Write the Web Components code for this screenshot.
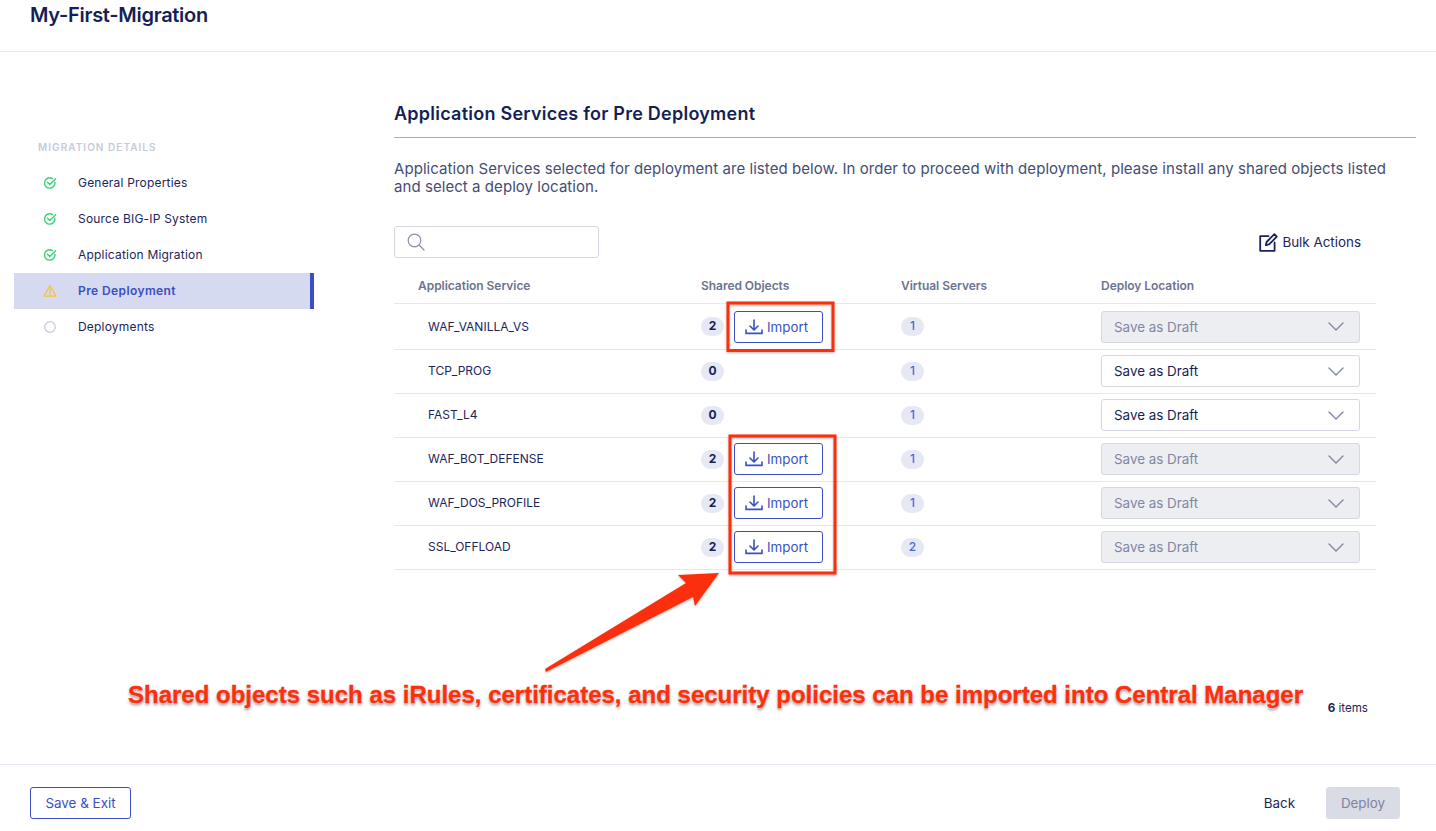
<!DOCTYPE html>
<html>
<head>
<meta charset="utf-8">
<title>Pre Deployment</title>
<style>
    html, body { margin: 0; height: 100%; background: #fff; }
    body { font-family: Inter, "Liberation Sans", sans-serif; color: #1c2559; }
</style>
</head>
<body>
<migration-page>
    <page-header slot="header">My-First-Migration</page-header>
    <side-nav slot="nav" label="MIGRATION DETAILS">
        <nav-step state="done">General Properties</nav-step>
        <nav-step state="done">Source BIG-IP System</nav-step>
        <nav-step state="done">Application Migration</nav-step>
        <nav-step state="warn" active>Pre Deployment</nav-step>
        <nav-step state="todo">Deployments</nav-step>
    </side-nav>
    <deploy-panel slot="main">
        <service-row name="WAF_VANILLA_VS" shared="2" servers="1" first></service-row>
        <service-row name="TCP_PROG" shared="0" servers="1" open></service-row>
        <service-row name="FAST_L4" shared="0" servers="1" open></service-row>
        <service-row name="WAF_BOT_DEFENSE" shared="2" servers="1"></service-row>
        <service-row name="WAF_DOS_PROFILE" shared="2" servers="1"></service-row>
        <service-row name="SSL_OFFLOAD" shared="2" servers="2"></service-row>
    </deploy-panel>
    <page-footer slot="footer"></page-footer>
</migration-page>
<shot-annotation></shot-annotation>

<script>
class MigrationPage extends HTMLElement {
    constructor() {
        super();
        this.attachShadow({ mode: "open" });
        this.shadowRoot.innerHTML = `
            <style>
                :host { display: flex; flex-direction: column; height: 831px; }
                .body { flex: 1; display: flex; min-height: 0; }
            </style>
            <slot name="header"></slot>
            <div class="body">
                <slot name="nav"></slot>
                <slot name="main"></slot>
            </div>
            <slot name="footer"></slot>
        `;
    }
}

class PageHeader extends HTMLElement {
    constructor() {
        super();
        this.attachShadow({ mode: "open" });
        this.shadowRoot.innerHTML = `
            <style>
                :host {
                    display: block;
                    height: 51px;
                    box-sizing: content-box;
                    border-bottom: 1px solid #e6e8f0;
                    padding-left: 30px;
                    font-size: 20px;
                    font-weight: 600;
                    letter-spacing: -0.28px;
                    line-height: 30px;
                    color: #141f57;
                }
            </style>
            <slot></slot>
        `;
    }
}

class SideNav extends HTMLElement {
    constructor() {
        super();
        this.attachShadow({ mode: "open" });
        this.shadowRoot.innerHTML = `
            <style>
                :host { display: block; width: 300px; margin-left: 14px; padding-top: 88px; flex: none; }
                .label {
                    font-size: 10px;
                    font-weight: 600;
                    letter-spacing: 1.05px;
                    line-height: 14px;
                    color: #c6cadb;
                    padding-left: 24px;
                    margin-bottom: 11px;
                }
            </style>
            <div class="label"></div>
            <slot></slot>
        `;
        this.shadowRoot.querySelector(".label").textContent = this.getAttribute("label");
    }
}

const stepIcons = {
    done: `<svg width="14" height="14" viewBox="0 0 14 14" fill="none" stroke="#3ed07a" stroke-width="1.4" stroke-linecap="round" stroke-linejoin="round"><path d="M11.9 6.2A5.2 5.2 0 1 1 9.6 2.6"/><path d="M4.4 6.2 6.8 8.6 12.6 2.8"/></svg>`,
    warn: `<svg width="14" height="14" viewBox="0 0 14 14" fill="none" stroke="#f3c23c" stroke-width="1.3" stroke-linejoin="round"><path d="M7 1.6 13 12.2H1Z"/><path d="M7 5.2V8.8M7 10V10.9" stroke-linecap="round"/></svg>`,
    todo: `<svg width="14" height="14" viewBox="0 0 14 14" fill="none" stroke="#c9ccdc" stroke-width="1.3"><circle cx="7" cy="7" r="5.3"/></svg>`
};

class NavStep extends HTMLElement {
    constructor() {
        super();
        this.attachShadow({ mode: "open" });
        this.shadowRoot.innerHTML = `
            <style>
                :host {
                    display: flex;
                    align-items: center;
                    height: 36px;
                    padding-left: 29px;
                    font-size: 12px;
                    letter-spacing: 0.2px;
                    color: #1c2559;
                    box-sizing: border-box;
                }
                :host([active]) {
                    background: #d6daf0;
                    border-right: 4px solid #3b4fc4;
                    color: #3b4fc4;
                    font-weight: 600;
                    letter-spacing: 0.4px;
                }
                .icon { display: flex; width: 35px; flex: none; }
                .text { padding-bottom: 2px; }
            </style>
            <span class="icon">${stepIcons[this.getAttribute("state")]}</span>
            <span class="text"><slot></slot></span>
        `;
    }
}

class DeployPanel extends HTMLElement {
    constructor() {
        super();
        this.attachShadow({ mode: "open" });
        this.shadowRoot.innerHTML = `
            <style>
                :host { display: block; flex: 1; margin-left: 80px; margin-right: 20px; padding-top: 49px; min-width: 0; }
                h2 {
                    margin: 0;
                    font-size: 18px;
                    font-weight: 600;
                    letter-spacing: 0.24px;
                    line-height: 26px;
                    color: #141f57;
                    padding-bottom: 10px;
                    border-bottom: 1px solid #a9abb3;
                }
                p {
                    margin: 22px 0 0;
                    font-size: 15px;
                    line-height: 18px;
                    color: #454d75;
                    letter-spacing: 0.06px;
                }
                .tools {
                    display: flex;
                    justify-content: space-between;
                    align-items: center;
                    margin-top: 30px;
                    width: 967px;
                }
                .search {
                    width: 205px;
                    height: 32px;
                    box-sizing: border-box;
                    border: 1px solid #d5d8e4;
                    border-radius: 3px;
                    display: flex;
                    align-items: center;
                    padding-left: 12px;
                }
                .bulk { display: flex; align-items: center; gap: 4px; font-size: 13.4px; color: #1c2559; }
                .table { width: 982px; margin-top: 14px; }
                .head {
                    display: grid;
                    grid-template-columns: 307px 200px 200px 275px;
                    height: 27px;
                    align-items: center;
                    border-bottom: 1px solid #e6e8ee;
                    font-size: 12px;
                    font-weight: 600;
                    letter-spacing: -0.04px;
                    color: #6c7390;
                    padding-bottom: 4px;
                    box-sizing: content-box;
                }
                .head span:first-child { padding-left: 24px; }
                .count { width: 982px; margin-top: 131px; text-align: right; font-size: 11.6px; color: #1c2559; box-sizing: border-box; padding-right: 8px; }
                .count b { font-weight: 700; }
            </style>
            <h2>Application Services for Pre Deployment</h2>
            <p>Application Services selected for deployment are listed below. In order to proceed with deployment, please install any shared objects listed and select a deploy location.</p>
            <div class="tools">
                <div class="search">
                    <svg width="18" height="18" viewBox="0 0 18 18" fill="none" stroke="#8b90ab" stroke-width="1.2" stroke-linecap="round"><circle cx="7.5" cy="7.5" r="6.3"/><path d="M12 12 17 17"/></svg>
                </div>
                <div class="bulk">
                    <svg width="19" height="19" viewBox="0 0 19 19" fill="none" stroke="#1c2559" stroke-width="1.8" stroke-linejoin="round" stroke-linecap="round"><path d="M9.5 3.2H1.2V17.8H15.6V9.5"/><path d="M6.8 12.2 7.6 9 15.4 1.2 17.8 3.6 10 11.4Z"/></svg>
                    <span>Bulk Actions</span>
                </div>
            </div>
            <div class="table">
                <div class="head">
                    <span>Application Service</span><span>Shared Objects</span><span>Virtual Servers</span><span>Deploy Location</span>
                </div>
                <slot></slot>
            </div>
            <div class="count"><b>6</b> items</div>
        `;
    }
}

class CountBadge extends HTMLElement {
    constructor() {
        super();
        this.attachShadow({ mode: "open" });
        this.shadowRoot.innerHTML = `
            <style>
                :host {
                    display: inline-block;
                    width: 23px;
                    height: 19px;
                    line-height: 18px;
                    border-radius: 10px;
                    background: #e6e8f4;
                    text-align: center;
                    font-size: 12px;
                    font-weight: 700;
                    color: #141f57;
                }
                :host([tone="blue"]) { color: #4a66dd; font-weight: 500; }
            </style>
            <slot></slot>
        `;
    }
}

class ImportButton extends HTMLElement {
    constructor() {
        super();
        this.attachShadow({ mode: "open" });
        this.shadowRoot.innerHTML = `
            <style>
                :host {
                    display: flex;
                    align-items: center;
                    gap: 4px;
                    width: 89px;
                    height: 32px;
                    padding-left: 10px;
                    box-sizing: border-box;
                    border: 1px solid #3b4fc4;
                    border-radius: 3px;
                    font-size: 13.4px;
                    color: #3b4fc4;
                }
            </style>
            <svg width="18" height="16" viewBox="0 0 18 16" fill="none" stroke="#3b4fc4" stroke-width="1.6" stroke-linecap="round" stroke-linejoin="round"><path d="M9 1V10.6M5 7 9 11 13 7"/><path d="M1 11V14.4H17V11"/></svg>
            <span>Import</span>
        `;
    }
}

class ServiceRow extends HTMLElement {
    constructor() {
        super();
        this.attachShadow({ mode: "open" });
        const shared = this.getAttribute("shared");
        this.shadowRoot.innerHTML = `
            <style>
                :host {
                    display: grid;
                    grid-template-columns: 307px 200px 200px 275px;
                    height: 42px;
                    padding-bottom: 1px;
                    align-items: center;
                    border-bottom: 1px solid #e6e8ee;
                    font-size: 12px;
                    color: #1c2559;
                }
                :host([first]) { height: 45px; padding-bottom: 0; }
                .name { padding-left: 34px; padding-bottom: 2px; }
                :host([first]) .name { padding-bottom: 0; }
                .shared { display: flex; align-items: center; gap: 10px; }
                .select {
                    width: 259px;
                    height: 32px;
                    box-sizing: border-box;
                    display: flex;
                    align-items: center;
                    justify-content: space-between;
                    padding: 0 15px 0 12px;
                    border: 1px solid #d5d8e4;
                    border-radius: 3px;
                    background: #eceef2;
                    font-size: 13.4px;
                    color: #8186a3;
                }
                :host([open]) .select { background: #fff; color: #141f57; }
            </style>
            <span class="name"></span>
            <span class="shared">
                <count-badge>${shared}</count-badge>
                ${shared !== "0" ? "<import-button></import-button>" : ""}
            </span>
            <span><count-badge tone="blue">${this.getAttribute("servers")}</count-badge></span>
            <div class="select">
                <span>Save as Draft</span>
                <svg width="16" height="9" viewBox="0 0 16 9" fill="none" stroke="#8186a3" stroke-width="1.4" stroke-linecap="round" stroke-linejoin="round"><path d="M1 1 8 8 15 1"/></svg>
            </div>
        `;
        this.shadowRoot.querySelector(".name").textContent = this.getAttribute("name");
    }
}

class PageFooter extends HTMLElement {
    constructor() {
        super();
        this.attachShadow({ mode: "open" });
        this.shadowRoot.innerHTML = `
            <style>
                :host {
                    display: flex;
                    align-items: center;
                    height: 32px;
                    border-top: 1px solid #e6e6f4;
                    padding: 22px 36px 12px 30px;
                    font-size: 13.4px;
                    color: #1c2559;
                    flex: none;
                }
                .save {
                    width: 101px;
                    height: 32px;
                    box-sizing: border-box;
                    border: 1px solid #3b4fc4;
                    border-radius: 3px;
                    color: #3b4fc4;
                    display: flex;
                    align-items: center;
                    justify-content: center;
                }
                .back { margin-left: auto; margin-right: 31px; }
                .deploy {
                    width: 74px;
                    height: 32px;
                    border-radius: 3px;
                    background: #d9dce5;
                    color: #7d83a3;
                    display: flex;
                    align-items: center;
                    justify-content: center;
                }
            </style>
            <div class="save">Save &amp; Exit</div>
            <div class="back">Back</div>
            <div class="deploy">Deploy</div>
        `;
    }
}

// red callouts drawn over the screenshot, so they sit on a free canvas
class ShotAnnotation extends HTMLElement {
    constructor() {
        super();
        this.attachShadow({ mode: "open" });
        this.shadowRoot.innerHTML = `
            <style>
                :host { position: absolute; left: 0; top: 0; width: 1436px; height: 831px; pointer-events: none; }
                svg { position: absolute; left: 0; top: 0; }
                .note {
                    position: absolute;
                    left: 128px;
                    top: 680px;
                    font-family: "Liberation Sans", Arial, sans-serif;
                    font-size: 24px;
                    line-height: 30px;
                    font-weight: 700;
                    white-space: nowrap;
                    color: #fb2f0c;
                    -webkit-text-stroke: 0.4px #fb2f0c;
                    text-shadow: 0 0 1px #fff, 0 0 2px #fff, 0 2px 3px rgba(0,0,0,.45);
                }
            </style>
            <svg width="1436" height="831" fill="none">
                <defs>
                    <filter id="sh" x="-10%" y="-10%" width="120%" height="120%">
                        <feDropShadow dx="0" dy="1" stdDeviation="1.2" flood-color="#000" flood-opacity=".3"/>
                    </filter>
                </defs>
                <g filter="url(#sh)">
                    <rect x="728" y="303" width="105" height="47.5" stroke="#fb2f0c" stroke-width="3"/>
                    <rect x="730" y="436" width="105" height="137" stroke="#fb2f0c" stroke-width="3"/>
                    <path d="M719 573 678 575 686 583 545 669 546 672 693 597 695 606Z" fill="#fb2f0c"/>
                </g>
            </svg>
            <div class="note">Shared objects such as iRules, certificates, and security policies can be imported into Central Manager</div>
        `;
    }
}

customElements.define("migration-page", MigrationPage);
customElements.define("page-header", PageHeader);
customElements.define("side-nav", SideNav);
customElements.define("nav-step", NavStep);
customElements.define("deploy-panel", DeployPanel);
customElements.define("count-badge", CountBadge);
customElements.define("import-button", ImportButton);
customElements.define("service-row", ServiceRow);
customElements.define("page-footer", PageFooter);
customElements.define("shot-annotation", ShotAnnotation);
</script>
</body>
</html>
